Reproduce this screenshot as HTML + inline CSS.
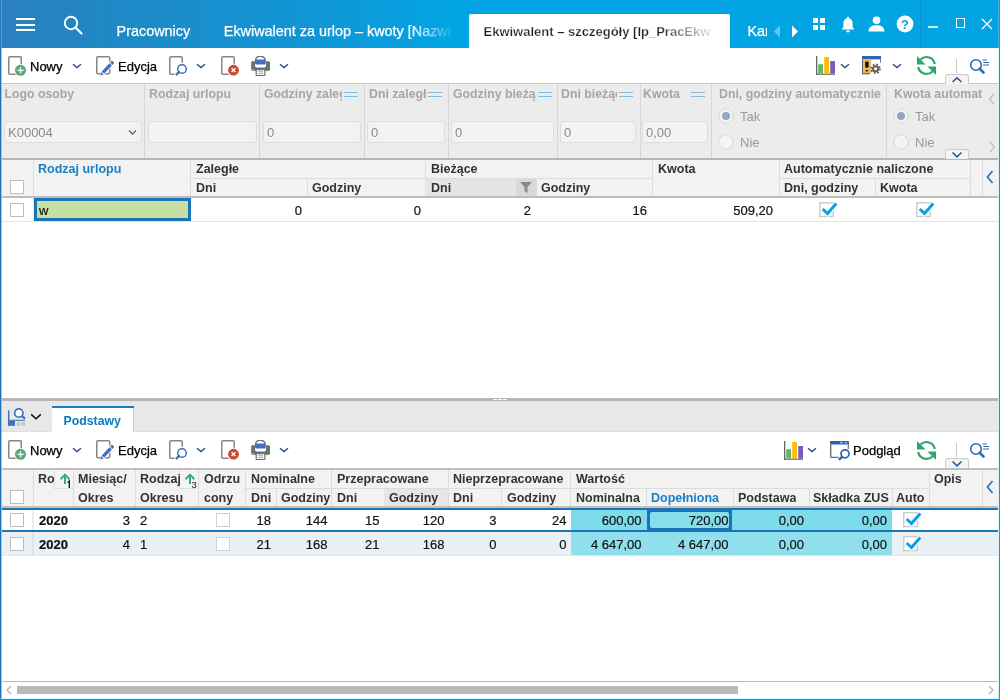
<!DOCTYPE html><html><head><meta charset="utf-8"><style>
*{box-sizing:border-box;margin:0;padding:0}
html,body{width:1000px;height:700px;overflow:hidden;background:#fff;font-family:"Liberation Sans",sans-serif;font-size:13px;color:#222}
.a{position:absolute}
#root{position:absolute;left:0;top:0;width:1000px;height:700px;will-change:transform;background:#fff}
.tt{color:#fff;font-size:14.4px;white-space:nowrap;line-height:16px;-webkit-text-stroke:0.25px #fff}
.lbl{position:absolute;color:#a6a6a6;font-weight:bold;font-size:12.3px;white-space:nowrap;overflow:hidden;line-height:15px}
.inp{position:absolute;background:#f3f3f3;border:1px solid #dcdcdc;border-radius:3px;height:21.5px;top:121px;color:#8a8a8a;padding-left:3px;padding-top:1px;line-height:19px;font-size:13px;white-space:nowrap}
.hd{position:absolute;font-weight:bold;color:#333;font-size:12.5px;white-space:nowrap;line-height:15px;overflow:hidden}
.c{position:absolute;font-size:13px;color:#111;white-space:nowrap;line-height:15px;-webkit-text-stroke:0.2px #111}
.r{text-align:right}
.cb{position:absolute;width:14px;height:14px;border:1px solid #bdbdbd;background:#fff}
.tb{position:absolute;font-size:13px;color:#000;white-space:nowrap;line-height:15px;-webkit-text-stroke:0.25px #000}
</style></head><body><div id="root"><div class="a" style="left:0;top:0;width:1000px;height:48px;background:linear-gradient(90deg,#2a80c0 0px,#2187c5 100px,#1195d4 300px,#03a4e3 450px,#03a4e3 1000px)"></div>
<div class="a" style="left:0px;top:0px;width:1px;height:48px;background:#2a78b8;"></div>
<div class="a" style="left:1px;top:0px;width:1px;height:48px;background:#5a9dd0;"></div>
<div class="a" style="left:16px;top:18px;width:19px;height:2px;background:#fff;"></div>
<div class="a" style="left:16px;top:23.5px;width:19px;height:2px;background:#fff;"></div>
<div class="a" style="left:16px;top:29px;width:19px;height:2px;background:#fff;"></div>
<svg class="a" style="left:60px;top:12px" width="26" height="26" viewBox="0 0 26 26"><circle cx="11" cy="11" r="6.2" fill="none" stroke="#fff" stroke-width="2"/><line x1="15.5" y1="15.5" x2="21.5" y2="21.5" stroke="#fff" stroke-width="2.2" stroke-linecap="round"/></svg>
<div class="tt a" style="left:116.6px;top:22.5px;">Pracownicy</div>
<div class="tt a" style="left:223.8px;top:22.5px;width:226px;overflow:hidden;-webkit-mask-image:linear-gradient(90deg,#000 185px,rgba(0,0,0,0.15) 226px)">Ekwiwalent za urlop – kwoty [Nazwisko</div>
<div class="a" style="left:469px;top:14px;width:261px;height:34px;background:#fff;border-radius:2px 2px 0 0"></div>
<div class="tt a" style="left:483.5px;top:24px;color:#1e1e1e;font-weight:bold;font-size:13px;line-height:15px;width:232px;overflow:hidden;-webkit-mask-image:linear-gradient(90deg,#000 175px,rgba(0,0,0,0.05) 232px)">Ekwiwalent – szczegóły [lp_PracEkw</div>
<div class="tt a" style="left:747.5px;top:22.5px;width:19.5px;overflow:hidden">Kar</div>
<svg class="a" style="left:773px;top:25px" width="8" height="13" viewBox="0 0 8 13"><path d="M7 0.5 L1 6.5 L7 12.5 Z" fill="#6cc4ee"/></svg>
<svg class="a" style="left:791px;top:25px" width="8" height="13" viewBox="0 0 8 13"><path d="M1 0.5 L7 6.5 L1 12.5 Z" fill="#fff"/></svg>
<div class="a" style="left:813px;top:18px;width:5px;height:5px;background:#fff;"></div>
<div class="a" style="left:820px;top:18px;width:5px;height:5px;background:#fff;"></div>
<div class="a" style="left:813px;top:25px;width:5px;height:5px;background:#fff;"></div>
<div class="a" style="left:820px;top:25px;width:5px;height:5px;background:#fff;"></div>
<svg class="a" style="left:840px;top:16px" width="16" height="17" viewBox="0 0 16 17"><path d="M8 1 C8.8 1 9.2 1.6 9.2 2.2 C11.6 2.8 12.6 5 12.6 7.5 L12.6 11 L14.5 13.5 L1.5 13.5 L3.4 11 L3.4 7.5 C3.4 5 4.4 2.8 6.8 2.2 C6.8 1.6 7.2 1 8 1 Z" fill="#fff"/><path d="M6 14.5 L10 14.5 C10 15.7 9.1 16.5 8 16.5 C6.9 16.5 6 15.7 6 14.5Z" fill="#fff"/></svg>
<svg class="a" style="left:868px;top:16px" width="17" height="16" viewBox="0 0 17 16"><circle cx="8.5" cy="4.3" r="3.8" fill="#fff"/><path d="M0.5 15.5 C0.5 11 4 9.3 8.5 9.3 C13 9.3 16.5 11 16.5 15.5 Z" fill="#fff"/></svg>
<svg class="a" style="left:896px;top:15px" width="18" height="18" viewBox="0 0 18 18"><circle cx="9" cy="9" r="8.4" fill="#fff"/><text x="9" y="13.6" text-anchor="middle" font-family="Liberation Sans" font-weight="bold" font-size="13" fill="#03a4e3">?</text></svg>
<div class="a" style="left:920px;top:0px;width:1px;height:48px;background:#0793cd;"></div>
<div class="a" style="left:998px;top:0px;width:1px;height:47px;background:#38b3e8;"></div>
<div class="a" style="left:928px;top:26px;width:10px;height:1.8px;background:rgba(255,255,255,0.8);"></div>
<div class="a" style="left:955.5px;top:18px;width:9.8px;height:9.8px;border:1.2px solid #fff"></div>
<svg class="a" style="left:981px;top:18px" width="12" height="12" viewBox="0 0 12 12"><path d="M1 1 L11 11 M11 1 L1 11" stroke="#fff" stroke-width="1.3"/></svg>
<svg class="a" style="left:8px;top:56px" width="22" height="22" viewBox="0 0 22 22"><rect x="0.75" y="0.75" width="12.5" height="17.5" rx="1.2" fill="none" stroke="#858585" stroke-width="1.5"/><circle cx="12.5" cy="14.3" r="6.4" fill="#fff"/><circle cx="12.5" cy="14.3" r="5.5" fill="#58a878"/><path d="M12.5 11.2 V17.4 M9.4 14.3 H15.6" stroke="#fff" stroke-width="1.3"/></svg>
<div class="tb" style="left:30px;top:59px;">Nowy</div>
<svg class="a" style="left:72px;top:63px" width="10" height="6" viewBox="0 0 10 6"><path d="M1 1.2 L5.0 4.6 L9 1.2" fill="none" stroke="#2c4f8a" stroke-width="1.5"/></svg>
<svg class="a" style="left:96px;top:56px" width="22" height="22" viewBox="0 0 22 22"><rect x="0.75" y="0.75" width="13.0" height="17.0" rx="1.2" fill="none" stroke="#858585" stroke-width="1.5"/><g transform="translate(4.2 19.6) rotate(-47)"><path d="M-0.8 0 L3.2 -2.6 H19.6 V2.6 H3.2 Z" fill="#fff"/><path d="M0 0 L3.2 -1.75 V1.75 Z" fill="#3f74c0"/><rect x="4.1" y="-1.75" width="11.3" height="3.5" fill="#3f74c0"/><rect x="16.2" y="-1.75" width="2.8" height="3.5" rx="0.8" fill="#3f74c0"/></g></svg>
<div class="tb" style="left:118px;top:59px;">Edycja</div>
<svg class="a" style="left:169px;top:56px" width="22" height="22" viewBox="0 0 22 22"><rect x="0.75" y="0.75" width="12.5" height="17.5" rx="1.2" fill="none" stroke="#858585" stroke-width="1.5"/><circle cx="13" cy="13" r="4.3" fill="#fff" stroke="#fff" stroke-width="4"/><path d="M9.5 16.5 L7.5 18.5" stroke="#fff" stroke-width="4.5" stroke-linecap="round"/><circle cx="13" cy="13" r="4.3" fill="#fff" stroke="#3d72bb" stroke-width="1.5"/><path d="M9.9 16.1 L7.6 18.4" stroke="#3d72bb" stroke-width="2.4" stroke-linecap="round"/></svg>
<svg class="a" style="left:196px;top:63px" width="10" height="6" viewBox="0 0 10 6"><path d="M1 1.2 L5.0 4.6 L9 1.2" fill="none" stroke="#2c4f8a" stroke-width="1.5"/></svg>
<svg class="a" style="left:221px;top:56px" width="22" height="22" viewBox="0 0 22 22"><rect x="0.75" y="0.75" width="12.5" height="17.5" rx="1.2" fill="none" stroke="#858585" stroke-width="1.5"/><circle cx="12.5" cy="14.2" r="6.3" fill="#fff"/><circle cx="12.5" cy="14.2" r="5.4" fill="#d2462a"/><path d="M10.6 12.3 L14.4 16.1 M14.4 12.3 L10.6 16.1" stroke="#fff" stroke-width="1.4"/></svg>
<svg class="a" style="left:250px;top:56px" width="22" height="22" viewBox="0 0 22 22"><rect x="1.2" y="5.2" width="18.8" height="9.6" rx="1.4" fill="#6e6e6e"/><rect x="5" y="5.2" width="11" height="6.2" rx="1.6" fill="#fff"/><path d="M5.4 5 Q5.4 0.3 10.3 0.3 Q15.2 0.3 15.2 5" fill="#fff" stroke="#6e6e6e" stroke-width="1.3"/><rect x="5" y="3.6" width="10.7" height="5" rx="1" fill="#3f74c0"/><rect x="2.2" y="13" width="1.6" height="0.9" fill="#c8c8c8"/><rect x="6.2" y="13.6" width="8.7" height="5.9" rx="0.6" fill="#fff" stroke="#6e6e6e" stroke-width="1.2"/><path d="M8.2 15.7 H13 M8.2 17.4 H13" stroke="#86a8dc" stroke-width="1"/></svg>
<svg class="a" style="left:279px;top:63px" width="10" height="6" viewBox="0 0 10 6"><path d="M1 1.2 L5.0 4.6 L9 1.2" fill="none" stroke="#2c4f8a" stroke-width="1.5"/></svg>
<svg class="a" style="left:815px;top:54px" width="22" height="22" viewBox="0 0 22 22"><rect x="1" y="2" width="1.3" height="18.8" fill="#666"/><rect x="1" y="19.6" width="19" height="1.2" fill="#666"/><rect x="3.2" y="10.2" width="4.8" height="9.4" fill="#62b76a"/><rect x="9.2" y="3" width="4.8" height="16.6" fill="#fdbf00"/><rect x="15.2" y="7" width="4.8" height="12.6" fill="#7e57c2"/></svg>
<svg class="a" style="left:840px;top:63px" width="10" height="6" viewBox="0 0 10 6"><path d="M1 1.2 L5.0 4.6 L9 1.2" fill="none" stroke="#2c4f8a" stroke-width="1.5"/></svg>
<svg class="a" style="left:861px;top:54px" width="22" height="22" viewBox="0 0 22 22"><rect x="1" y="2" width="19" height="3.4" fill="#2f66b3"/><rect x="19" y="5.4" width="1.1" height="3.2" fill="#777"/><path d="M1.6 5.4 V19.6 H9" fill="none" stroke="#555" stroke-width="1.1"/><rect x="2.1" y="5.4" width="8" height="13.8" fill="#eeba55"/><rect x="4.2" y="7.4" width="3.4" height="6.4" rx="1.2" fill="#111"/><path d="M4.4 16 H7.4 L5.9 17.9 Z" fill="#111"/><g transform="translate(14.6 14.8)"><circle r="4.3" fill="none" stroke="#5e5e5e" stroke-width="1.9" stroke-dasharray="1.7 1.68"/><circle r="2.6" fill="none" stroke="#5e5e5e" stroke-width="2.1"/></g></svg>
<svg class="a" style="left:892px;top:63px" width="10" height="6" viewBox="0 0 10 6"><path d="M1 1.2 L5.0 4.6 L9 1.2" fill="none" stroke="#2c4f8a" stroke-width="1.5"/></svg>
<svg class="a" style="left:916px;top:54px" width="22" height="22" viewBox="0 0 22 22"><g fill="none" stroke="#2ea56a" stroke-width="2.2"><path d="M18.8 10 A8.4 8.4 0 0 0 4.56 5.56"/><path d="M2.23 12.96 A8.4 8.4 0 0 0 16.44 17.44"/></g><path d="M1 2 L1 10.6 L9.6 10.6 Z" fill="#2ea56a"/><path d="M20 21 L20 12.4 L11.4 12.4 Z" fill="#2ea56a"/></svg>
<div class="a" style="left:956px;top:59px;width:1px;height:14px;background:#c8c8c8;"></div>
<svg class="a" style="left:969px;top:58px" width="22" height="18" viewBox="0 0 22 18"><circle cx="7" cy="7" r="5.3" fill="none" stroke="#2f68b5" stroke-width="1.6"/><path d="M10.6 10.6 L14.5 14.5" stroke="#2f68b5" stroke-width="2.6" stroke-linecap="round"/><path d="M13.5 2 H18 M14.5 4.5 H20 M14 7 H20" stroke="#2f68b5" stroke-width="1.1"/></svg>
<div class="a" style="left:0px;top:83px;width:1000px;height:1px;background:#c9c9c9;"></div>
<div class="a" style="left:0px;top:84px;width:1000px;height:74px;background:#ececec;"></div>
<div class="a" style="left:0px;top:158px;width:1000px;height:2px;background:#b5b5b5;"></div>
<div class="a" style="left:144px;top:84px;width:1px;height:74px;background:#d6d6d6;"></div>
<div class="a" style="left:259px;top:84px;width:1px;height:74px;background:#d6d6d6;"></div>
<div class="a" style="left:364px;top:84px;width:1px;height:74px;background:#d6d6d6;"></div>
<div class="a" style="left:448px;top:84px;width:1px;height:74px;background:#d6d6d6;"></div>
<div class="a" style="left:557px;top:84px;width:1px;height:74px;background:#d6d6d6;"></div>
<div class="a" style="left:640px;top:84px;width:1px;height:74px;background:#d6d6d6;"></div>
<div class="a" style="left:711px;top:84px;width:1px;height:74px;background:#d6d6d6;"></div>
<div class="a" style="left:886px;top:84px;width:1px;height:74px;background:#d6d6d6;"></div>
<div class="lbl" style="left:4.5px;top:87px;width:135px">Logo osoby</div>
<div class="lbl" style="left:149px;top:87px;width:108px">Rodzaj urlopu</div>
<div class="lbl" style="left:264px;top:87px;width:78px">Godziny zaległe</div>
<div class="a" style="left:344px;top:92px;width:14px;height:1.2px;background:#86bce0;"></div>
<div class="a" style="left:344px;top:96px;width:14px;height:1.2px;background:#86bce0;"></div>
<div class="lbl" style="left:369px;top:87px;width:58px">Dni zaległe</div>
<div class="a" style="left:428px;top:92px;width:14px;height:1.2px;background:#86bce0;"></div>
<div class="a" style="left:428px;top:96px;width:14px;height:1.2px;background:#86bce0;"></div>
<div class="lbl" style="left:453px;top:87px;width:83px">Godziny bieżące</div>
<div class="a" style="left:538px;top:92px;width:14px;height:1.2px;background:#86bce0;"></div>
<div class="a" style="left:538px;top:96px;width:14px;height:1.2px;background:#86bce0;"></div>
<div class="lbl" style="left:561px;top:87px;width:56px">Dni bieżące</div>
<div class="a" style="left:619px;top:92px;width:14px;height:1.2px;background:#86bce0;"></div>
<div class="a" style="left:619px;top:96px;width:14px;height:1.2px;background:#86bce0;"></div>
<div class="lbl" style="left:643px;top:87px;width:45px">Kwota</div>
<div class="a" style="left:691px;top:92px;width:14px;height:1.2px;background:#86bce0;"></div>
<div class="a" style="left:691px;top:96px;width:14px;height:1.2px;background:#86bce0;"></div>
<div class="lbl" style="left:719px;top:87px;width:165px">Dni, godziny automatycznie</div>
<div class="lbl" style="left:894px;top:87px;width:88px">Kwota automatyczne</div>
<div class="inp" style="left:4px;width:137.5px">K00004</div>
<svg class="a" style="left:128px;top:129px" width="10" height="7" viewBox="0 0 10 7"><path d="M1 1.5 L4.5 5 L8 1.5" fill="none" stroke="#666" stroke-width="1.3"/></svg>
<div class="inp" style="left:148px;width:109px"></div>
<div class="inp" style="left:263px;width:98px">0</div>
<div class="inp" style="left:367px;width:78px">0</div>
<div class="inp" style="left:451px;width:103px">0</div>
<div class="inp" style="left:560px;width:76px">0</div>
<div class="inp" style="left:642px;width:66px">0,00</div>
<svg class="a" style="left:718px;top:108px" width="16" height="16" viewBox="0 0 16 16"><circle cx="8" cy="8" r="7.2" fill="#f4f4f4" stroke="#d6d6d6" stroke-width="1"/><circle cx="8" cy="8" r="4" fill="#93a6c2"/></svg>
<div class="lbl" style="left:740px;top:109px;font-weight:normal;color:#9a9a9a;font-size:13px">Tak</div>
<svg class="a" style="left:718px;top:134px" width="16" height="16" viewBox="0 0 16 16"><circle cx="8" cy="8" r="7.2" fill="#f4f4f4" stroke="#d6d6d6" stroke-width="1"/></svg>
<div class="lbl" style="left:740px;top:135px;font-weight:normal;color:#9a9a9a;font-size:13px">Nie</div>
<svg class="a" style="left:893px;top:108px" width="16" height="16" viewBox="0 0 16 16"><circle cx="8" cy="8" r="7.2" fill="#f4f4f4" stroke="#d6d6d6" stroke-width="1"/><circle cx="8" cy="8" r="4" fill="#93a6c2"/></svg>
<div class="lbl" style="left:915px;top:109px;font-weight:normal;color:#9a9a9a;font-size:13px">Tak</div>
<svg class="a" style="left:893px;top:134px" width="16" height="16" viewBox="0 0 16 16"><circle cx="8" cy="8" r="7.2" fill="#f4f4f4" stroke="#d6d6d6" stroke-width="1"/></svg>
<div class="lbl" style="left:915px;top:135px;font-weight:normal;color:#9a9a9a;font-size:13px">Nie</div>
<svg class="a" style="left:987.5px;top:93px" width="8" height="12" viewBox="0 0 8 12"><path d="M6 1 L1.5 6 L6 11" fill="none" stroke="#bdbdbd" stroke-width="1.2"/></svg>
<svg class="a" style="left:987.5px;top:141px" width="8" height="12" viewBox="0 0 8 12"><path d="M2 1 L6.5 6 L2 11" fill="none" stroke="#bdbdbd" stroke-width="1.2"/></svg>
<div class="a" style="left:945px;top:74px;width:24px;height:10px;background:#f4f4f4;border:1px solid #cbcbcb;border-bottom:none;border-radius:3px 3px 0 0"></div>
<svg class="a" style="left:951px;top:76px" width="12" height="7" viewBox="0 0 12 7"><path d="M1.5 6 L6 1.8 L10.5 6" fill="none" stroke="#2a5d9f" stroke-width="1.6"/></svg>
<div class="a" style="left:945px;top:149px;width:24px;height:10px;background:#f4f4f4;border:1px solid #cbcbcb;border-bottom:none;border-radius:3px 3px 0 0"></div>
<svg class="a" style="left:951px;top:151px" width="12" height="7" viewBox="0 0 12 7"><path d="M1.5 1.5 L6 5.8 L10.5 1.5" fill="none" stroke="#2a5d9f" stroke-width="1.6"/></svg>
<div class="a" style="left:0px;top:160px;width:1000px;height:36px;background:#f2f2f2;"></div>
<div class="a" style="left:0px;top:196px;width:1000px;height:2px;background:#bdbdbd;"></div>
<div class="a" style="left:191px;top:178px;width:461px;height:1px;background:#dcdcdc;"></div>
<div class="a" style="left:780px;top:178px;width:190px;height:1px;background:#dcdcdc;"></div>
<div class="a" style="left:33px;top:160px;width:1px;height:36px;background:#dcdcdc;"></div>
<div class="a" style="left:190px;top:160px;width:1px;height:36px;background:#dcdcdc;"></div>
<div class="a" style="left:307px;top:178px;width:1px;height:18px;background:#dcdcdc;"></div>
<div class="a" style="left:425px;top:160px;width:1px;height:36px;background:#dcdcdc;"></div>
<div class="a" style="left:425px;top:179px;width:110px;height:17px;background:#e5e5e5;"></div>
<div class="a" style="left:516px;top:179px;width:20px;height:17px;background:#d9d9d9;"></div>
<svg class="a" style="left:519px;top:181px" width="14" height="13" viewBox="0 0 14 13"><path d="M1 1 H13 L8.5 6 V12 L5.5 10 V6 Z" fill="#8a8a8a"/></svg>
<div class="a" style="left:536px;top:178px;width:1px;height:18px;background:#dcdcdc;"></div>
<div class="a" style="left:652px;top:160px;width:1px;height:36px;background:#dcdcdc;"></div>
<div class="a" style="left:779px;top:160px;width:1px;height:36px;background:#dcdcdc;"></div>
<div class="a" style="left:875px;top:178px;width:1px;height:18px;background:#dcdcdc;"></div>
<div class="a" style="left:970px;top:160px;width:1px;height:36px;background:#dcdcdc;"></div>
<div class="a" style="left:982px;top:160px;width:1px;height:36px;background:#dcdcdc;"></div>
<div class="a" style="left:983px;top:160px;width:16px;height:36px;background:#f2f2f2;"></div>
<svg class="a" style="left:986px;top:170px" width="8" height="14" viewBox="0 0 8 14"><path d="M6.5 1 L1.5 7 L6.5 13" fill="none" stroke="#2d6bb5" stroke-width="1.6"/></svg>
<div class="cb" style="left:10px;top:180px"></div>
<div class="hd" style="left:38px;top:162px;color:#1b7fc3">Rodzaj urlopu</div>
<div class="hd" style="left:196px;top:162px;">Zaległe</div>
<div class="hd" style="left:196px;top:181px;">Dni</div>
<div class="hd" style="left:312px;top:181px;">Godziny</div>
<div class="hd" style="left:431px;top:162px;">Bieżące</div>
<div class="hd" style="left:431px;top:181px;">Dni</div>
<div class="hd" style="left:541px;top:181px;">Godziny</div>
<div class="hd" style="left:658px;top:162px;">Kwota</div>
<div class="hd" style="left:784px;top:162px;">Automatycznie naliczone</div>
<div class="hd" style="left:784px;top:181px;">Dni, godziny</div>
<div class="hd" style="left:880px;top:181px;">Kwota</div>
<div class="cb" style="left:10px;top:203px"></div>
<div class="a" style="left:34px;top:198px;width:157px;height:23px;background:#1b74b8;"></div>
<div class="a" style="left:37px;top:201px;width:151px;height:17px;background:#c6e0a4;"></div>
<div class="c" style="left:39px;top:203px;">w</div>
<div class="c r" style="left:102px;width:200px;top:203px;">0</div>
<div class="c r" style="left:221px;width:200px;top:203px;">0</div>
<div class="c r" style="left:331px;width:200px;top:203px;">2</div>
<div class="c r" style="left:447px;width:200px;top:203px;">16</div>
<div class="c r" style="left:573px;width:200px;top:203px;">509,20</div>
<svg class="a" style="left:819px;top:202px" width="20" height="17" viewBox="0 0 20 17"><rect x="0.75" y="0.75" width="13.5" height="13.8" fill="#fff" stroke="#cdcdcd" stroke-width="1.5"/><path d="M3.7 7 L8.5 11.6 L17.3 1.4" fill="none" stroke="#fff" stroke-width="5"/><path d="M3.7 7 L8.5 11.6 L17.3 1.4" fill="none" stroke="#08a2e2" stroke-width="3"/></svg>
<svg class="a" style="left:916px;top:202px" width="20" height="17" viewBox="0 0 20 17"><rect x="0.75" y="0.75" width="13.5" height="13.8" fill="#fff" stroke="#cdcdcd" stroke-width="1.5"/><path d="M3.7 7 L8.5 11.6 L17.3 1.4" fill="none" stroke="#fff" stroke-width="5"/><path d="M3.7 7 L8.5 11.6 L17.3 1.4" fill="none" stroke="#08a2e2" stroke-width="3"/></svg>
<div class="a" style="left:0px;top:221px;width:1000px;height:1px;background:#dde6ee;"></div>
<div class="a" style="left:33px;top:198px;width:1px;height:23px;background:#e0e9f1;"></div>
<div class="a" style="left:0px;top:398px;width:1000px;height:3px;background:#b6b6b6;"></div>
<div class="a" style="left:493px;top:399px;width:4px;height:1px;background:#fff;"></div>
<div class="a" style="left:498px;top:399px;width:4px;height:1px;background:#fff;"></div>
<div class="a" style="left:503px;top:399px;width:4px;height:1px;background:#fff;"></div>
<div class="a" style="left:0px;top:401px;width:1000px;height:31px;background:#e8e8e8;"></div>
<div class="a" style="left:0px;top:431px;width:52px;height:1px;background:#dedede;"></div>
<div class="a" style="left:134px;top:431px;width:866px;height:1px;background:#dedede;"></div>
<div class="a" style="left:52px;top:406px;width:82px;height:26px;background:#fff;"></div>
<div class="a" style="left:133px;top:408px;width:1px;height:24px;background:#cfcfcf;"></div>
<div class="a" style="left:52px;top:406px;width:82px;height:2px;background:#1a7cc1;"></div>
<div class="hd" style="left:63.5px;top:414px;color:#0b7bc0;font-size:12.3px">Podstawy</div>
<svg class="a" style="left:7px;top:407px" width="24" height="22" viewBox="0 0 24 22"><rect x="1" y="3.4" width="1.4" height="15.2" fill="#3d72bb"/><rect x="1" y="12.8" width="17" height="1" fill="#3d72bb"/><rect x="1" y="13.8" width="7" height="5" fill="#3d72bb"/><rect x="9.8" y="15.2" width="3" height="3.6" fill="#c4c4c4"/><rect x="14.2" y="15.2" width="3.8" height="3.6" fill="#c4c4c4"/><circle cx="11.8" cy="6" r="4.2" fill="#fff" stroke="#3d72bb" stroke-width="1.7"/><path d="M15 9.4 L17.4 11" stroke="#3d72bb" stroke-width="2.2" stroke-linecap="round"/></svg>
<svg class="a" style="left:30px;top:413px" width="12" height="8" viewBox="0 0 12 8"><path d="M1.2 1.4 L6 5.8 L10.8 1.4" fill="none" stroke="#111" stroke-width="1.5"/></svg>
<svg class="a" style="left:8px;top:440px" width="22" height="22" viewBox="0 0 22 22"><rect x="0.75" y="0.75" width="12.5" height="17.5" rx="1.2" fill="none" stroke="#858585" stroke-width="1.5"/><circle cx="12.5" cy="14.3" r="6.4" fill="#fff"/><circle cx="12.5" cy="14.3" r="5.5" fill="#58a878"/><path d="M12.5 11.2 V17.4 M9.4 14.3 H15.6" stroke="#fff" stroke-width="1.3"/></svg>
<div class="tb" style="left:30px;top:443px;">Nowy</div>
<svg class="a" style="left:72px;top:447px" width="10" height="6" viewBox="0 0 10 6"><path d="M1 1.2 L5.0 4.6 L9 1.2" fill="none" stroke="#2c4f8a" stroke-width="1.5"/></svg>
<svg class="a" style="left:96px;top:440px" width="22" height="22" viewBox="0 0 22 22"><rect x="0.75" y="0.75" width="13.0" height="17.0" rx="1.2" fill="none" stroke="#858585" stroke-width="1.5"/><g transform="translate(4.2 19.6) rotate(-47)"><path d="M-0.8 0 L3.2 -2.6 H19.6 V2.6 H3.2 Z" fill="#fff"/><path d="M0 0 L3.2 -1.75 V1.75 Z" fill="#3f74c0"/><rect x="4.1" y="-1.75" width="11.3" height="3.5" fill="#3f74c0"/><rect x="16.2" y="-1.75" width="2.8" height="3.5" rx="0.8" fill="#3f74c0"/></g></svg>
<div class="tb" style="left:118px;top:443px;">Edycja</div>
<svg class="a" style="left:169px;top:440px" width="22" height="22" viewBox="0 0 22 22"><rect x="0.75" y="0.75" width="12.5" height="17.5" rx="1.2" fill="none" stroke="#858585" stroke-width="1.5"/><circle cx="13" cy="13" r="4.3" fill="#fff" stroke="#fff" stroke-width="4"/><path d="M9.5 16.5 L7.5 18.5" stroke="#fff" stroke-width="4.5" stroke-linecap="round"/><circle cx="13" cy="13" r="4.3" fill="#fff" stroke="#3d72bb" stroke-width="1.5"/><path d="M9.9 16.1 L7.6 18.4" stroke="#3d72bb" stroke-width="2.4" stroke-linecap="round"/></svg>
<svg class="a" style="left:196px;top:447px" width="10" height="6" viewBox="0 0 10 6"><path d="M1 1.2 L5.0 4.6 L9 1.2" fill="none" stroke="#2c4f8a" stroke-width="1.5"/></svg>
<svg class="a" style="left:221px;top:440px" width="22" height="22" viewBox="0 0 22 22"><rect x="0.75" y="0.75" width="12.5" height="17.5" rx="1.2" fill="none" stroke="#858585" stroke-width="1.5"/><circle cx="12.5" cy="14.2" r="6.3" fill="#fff"/><circle cx="12.5" cy="14.2" r="5.4" fill="#d2462a"/><path d="M10.6 12.3 L14.4 16.1 M14.4 12.3 L10.6 16.1" stroke="#fff" stroke-width="1.4"/></svg>
<svg class="a" style="left:250px;top:440px" width="22" height="22" viewBox="0 0 22 22"><rect x="1.2" y="5.2" width="18.8" height="9.6" rx="1.4" fill="#6e6e6e"/><rect x="5" y="5.2" width="11" height="6.2" rx="1.6" fill="#fff"/><path d="M5.4 5 Q5.4 0.3 10.3 0.3 Q15.2 0.3 15.2 5" fill="#fff" stroke="#6e6e6e" stroke-width="1.3"/><rect x="5" y="3.6" width="10.7" height="5" rx="1" fill="#3f74c0"/><rect x="2.2" y="13" width="1.6" height="0.9" fill="#c8c8c8"/><rect x="6.2" y="13.6" width="8.7" height="5.9" rx="0.6" fill="#fff" stroke="#6e6e6e" stroke-width="1.2"/><path d="M8.2 15.7 H13 M8.2 17.4 H13" stroke="#86a8dc" stroke-width="1"/></svg>
<svg class="a" style="left:279px;top:447px" width="10" height="6" viewBox="0 0 10 6"><path d="M1 1.2 L5.0 4.6 L9 1.2" fill="none" stroke="#2c4f8a" stroke-width="1.5"/></svg>
<svg class="a" style="left:783px;top:439px" width="22" height="22" viewBox="0 0 22 22"><rect x="1" y="2" width="1.3" height="18.8" fill="#666"/><rect x="1" y="19.6" width="19" height="1.2" fill="#666"/><rect x="3.2" y="10.2" width="4.8" height="9.4" fill="#62b76a"/><rect x="9.2" y="3" width="4.8" height="16.6" fill="#fdbf00"/><rect x="15.2" y="7" width="4.8" height="12.6" fill="#7e57c2"/></svg>
<svg class="a" style="left:807px;top:447px" width="10" height="6" viewBox="0 0 10 6"><path d="M1 1.2 L5.0 4.6 L9 1.2" fill="none" stroke="#2c4f8a" stroke-width="1.5"/></svg>
<svg class="a" style="left:826px;top:436px" width="26" height="26" viewBox="0 0 26 26"><rect x="4" y="5" width="19" height="3.4" rx="0.6" fill="#2a65b5"/><rect x="14" y="6.2" width="2.8" height="1" fill="#cfe0f5"/><rect x="19" y="6.2" width="2.2" height="1" fill="#cfe0f5"/><path d="M4.7 8.2 V20.6 Q4.7 21.4 5.5 21.4 H12.5" fill="none" stroke="#6e6e6e" stroke-width="1.4"/><path d="M22.3 8.2 V13" stroke="#6e6e6e" stroke-width="1.2"/><circle cx="19" cy="17.8" r="4" fill="#fff" stroke="#2a65b5" stroke-width="1.7"/><path d="M16 20.8 L13.6 23.2" stroke="#2a65b5" stroke-width="2.4" stroke-linecap="round"/></svg>
<div class="tb" style="left:853px;top:443px;">Podgląd</div>
<svg class="a" style="left:916px;top:439px" width="22" height="22" viewBox="0 0 22 22"><g fill="none" stroke="#2ea56a" stroke-width="2.2"><path d="M18.8 10 A8.4 8.4 0 0 0 4.56 5.56"/><path d="M2.23 12.96 A8.4 8.4 0 0 0 16.44 17.44"/></g><path d="M1 2 L1 10.6 L9.6 10.6 Z" fill="#2ea56a"/><path d="M20 21 L20 12.4 L11.4 12.4 Z" fill="#2ea56a"/></svg>
<div class="a" style="left:956px;top:443px;width:1px;height:14px;background:#c8c8c8;"></div>
<svg class="a" style="left:969px;top:442px" width="22" height="18" viewBox="0 0 22 18"><circle cx="7" cy="7" r="5.3" fill="none" stroke="#2f68b5" stroke-width="1.6"/><path d="M10.6 10.6 L14.5 14.5" stroke="#2f68b5" stroke-width="2.6" stroke-linecap="round"/><path d="M13.5 2 H18 M14.5 4.5 H20 M14 7 H20" stroke="#2f68b5" stroke-width="1.1"/></svg>
<div class="a" style="left:945px;top:458px;width:24px;height:10px;background:#f4f4f4;border:1px solid #cbcbcb;border-bottom:none;border-radius:3px 3px 0 0"></div>
<svg class="a" style="left:951px;top:460px" width="12" height="7" viewBox="0 0 12 7"><path d="M1.5 1.5 L6 5.8 L10.5 1.5" fill="none" stroke="#2a5d9f" stroke-width="1.6"/></svg>
<div class="a" style="left:0px;top:468px;width:1000px;height:2px;background:#bdbdbd;"></div>
<div class="a" style="left:0px;top:470px;width:1000px;height:36px;background:#f2f2f2;"></div>
<div class="a" style="left:0px;top:506px;width:1000px;height:2px;background:#c4c0bc;"></div>
<div class="a" style="left:246px;top:488px;width:683px;height:1px;background:#dcdcdc;"></div>
<div class="a" style="left:33px;top:470px;width:1px;height:36px;background:#dcdcdc;"></div>
<div class="a" style="left:135px;top:470px;width:1px;height:36px;background:#dcdcdc;"></div>
<div class="a" style="left:198px;top:470px;width:1px;height:36px;background:#dcdcdc;"></div>
<div class="a" style="left:245px;top:470px;width:1px;height:36px;background:#dcdcdc;"></div>
<div class="a" style="left:331px;top:470px;width:1px;height:36px;background:#dcdcdc;"></div>
<div class="a" style="left:448px;top:470px;width:1px;height:36px;background:#dcdcdc;"></div>
<div class="a" style="left:570px;top:470px;width:1px;height:36px;background:#dcdcdc;"></div>
<div class="a" style="left:929px;top:470px;width:1px;height:36px;background:#dcdcdc;"></div>
<div class="a" style="left:982px;top:470px;width:1px;height:36px;background:#dcdcdc;"></div>
<div class="a" style="left:73px;top:488px;width:1px;height:18px;background:#dcdcdc;"></div>
<div class="a" style="left:276px;top:488px;width:1px;height:18px;background:#dcdcdc;"></div>
<div class="a" style="left:384px;top:488px;width:1px;height:18px;background:#dcdcdc;"></div>
<div class="a" style="left:501px;top:488px;width:1px;height:18px;background:#dcdcdc;"></div>
<div class="a" style="left:646px;top:488px;width:1px;height:18px;background:#dcdcdc;"></div>
<div class="a" style="left:733px;top:488px;width:1px;height:18px;background:#dcdcdc;"></div>
<div class="a" style="left:809px;top:488px;width:1px;height:18px;background:#dcdcdc;"></div>
<div class="a" style="left:892px;top:488px;width:1px;height:18px;background:#dcdcdc;"></div>
<div class="a" style="left:73px;top:470px;width:1px;height:36px;background:#dcdcdc;"></div>
<div class="a" style="left:198px;top:470px;width:1px;height:36px;background:#dcdcdc;"></div>
<div class="a" style="left:54px;top:470px;width:19px;height:18px;background:#f4f4f4;"></div>
<div class="a" style="left:54px;top:470px;width:1px;height:19px;background:#dedede;"></div>
<div class="a" style="left:54px;top:488px;width:19px;height:1px;background:#dedede;"></div>
<svg class="a" style="left:54px;top:470px" width="19" height="19" viewBox="0 0 19 19"><path d="M11 14 V5 M6.6 9.2 L11 4.6 L15.4 9.2" fill="none" stroke="#46a877" stroke-width="2"/><path d="M13.6 12.6 L15.3 11 V18" fill="none" stroke="#111" stroke-width="1.3"/></svg>
<div class="a" style="left:179px;top:470px;width:19px;height:18px;background:#f4f4f4;"></div>
<div class="a" style="left:179px;top:470px;width:1px;height:19px;background:#dedede;"></div>
<div class="a" style="left:179px;top:488px;width:19px;height:1px;background:#dedede;"></div>
<svg class="a" style="left:179px;top:470px" width="19" height="19" viewBox="0 0 19 19"><path d="M11 14 V5 M6.6 9.2 L11 4.6 L15.4 9.2" fill="none" stroke="#46a877" stroke-width="2"/><text x="12.4" y="18" font-family="Liberation Sans" font-size="9.5" fill="#111">3</text></svg>
<div class="a" style="left:384px;top:489px;width:64px;height:17px;background:#e6e6e6;"></div>
<div class="a" style="left:983px;top:470px;width:17px;height:36px;background:#f2f2f2;"></div>
<svg class="a" style="left:986px;top:480px" width="8" height="14" viewBox="0 0 8 14"><path d="M6.5 1 L1.5 7 L6.5 13" fill="none" stroke="#2d6bb5" stroke-width="1.6"/></svg>
<div class="cb" style="left:10px;top:490px"></div>
<div class="hd" style="left:38px;top:472px;">Ro</div>
<div class="hd" style="left:78px;top:472px;">Miesiąc/</div>
<div class="hd" style="left:78px;top:491px;">Okres</div>
<div class="hd" style="left:140px;top:472px;width:39.5px">Rodzaj</div>
<div class="hd" style="left:140px;top:491px;">Okresu</div>
<div class="hd" style="left:204px;top:472px;">Odrzu</div>
<div class="hd" style="left:204px;top:491px;">cony</div>
<div class="hd" style="left:251px;top:472px;">Nominalne</div>
<div class="hd" style="left:251px;top:491px;">Dni</div>
<div class="hd" style="left:281px;top:491px;">Godziny</div>
<div class="hd" style="left:337px;top:472px;">Przepracowane</div>
<div class="hd" style="left:337px;top:491px;">Dni</div>
<div class="hd" style="left:389px;top:491px;">Godziny</div>
<div class="hd" style="left:453px;top:472px;">Nieprzepracowane</div>
<div class="hd" style="left:453px;top:491px;">Dni</div>
<div class="hd" style="left:507px;top:491px;">Godziny</div>
<div class="hd" style="left:576px;top:472px;">Wartość</div>
<div class="hd" style="left:576px;top:491px;">Nominalna</div>
<div class="hd" style="left:651px;top:491px;color:#1b7fc3">Dopełniona</div>
<div class="hd" style="left:738px;top:491px;">Podstawa</div>
<div class="hd" style="left:813px;top:491px;">Składka ZUS</div>
<div class="hd" style="left:896px;top:491px;">Auto</div>
<div class="hd" style="left:934px;top:472px;">Opis</div>
<div class="a" style="left:2px;top:508px;width:998px;height:2px;background:#1a74b8;"></div>
<div class="a" style="left:2px;top:510px;width:997px;height:20px;background:#fff;"></div>
<div class="a" style="left:2px;top:530px;width:998px;height:2px;background:#1a74b8;"></div>
<div class="a" style="left:2px;top:532px;width:997px;height:23px;background:#eaf1f6;"></div>
<div class="a" style="left:2px;top:555px;width:997px;height:1px;background:#dfe8ef;"></div>
<div class="a" style="left:571px;top:510px;width:321px;height:20px;background:#7edcea;"></div>
<div class="a" style="left:571px;top:532px;width:321px;height:23px;background:#8fe0ec;"></div>
<div class="a" style="left:647px;top:510px;width:85px;height:20px;background:#1a74b8;"></div>
<div class="a" style="left:650px;top:511.5px;width:79px;height:16.5px;background:#86deeb;border-radius:2px"></div>
<div class="a" style="left:32px;top:510px;width:2px;height:20px;background:#e3eef8;"></div>
<div class="a" style="left:32px;top:532px;width:2px;height:23px;background:#d9e6f2;"></div>
<div class="cb" style="left:10px;top:513px"></div>
<div class="c" style="left:39px;top:513px;font-weight:bold">2020</div>
<div class="c r" style="left:-70px;width:200px;top:513px;">3</div>
<div class="c" style="left:140px;top:513px;">2</div>
<div class="cb" style="left:216px;top:513px;border-color:#d0d0d0"></div>
<div class="c r" style="left:71px;width:200px;top:513px;">18</div>
<div class="c r" style="left:127.5px;width:200px;top:513px;">144</div>
<div class="c r" style="left:179.5px;width:200px;top:513px;">15</div>
<div class="c r" style="left:244.5px;width:200px;top:513px;">120</div>
<div class="c r" style="left:296.5px;width:200px;top:513px;">3</div>
<div class="c r" style="left:366.5px;width:200px;top:513px;">24</div>
<div class="c r" style="left:441.5px;width:200px;top:513px;">600,00</div>
<div class="c r" style="left:528.5px;width:200px;top:513px;">720,00</div>
<div class="c r" style="left:604px;width:200px;top:513px;">0,00</div>
<div class="c r" style="left:687px;width:200px;top:513px;">0,00</div>
<svg class="a" style="left:903px;top:512px" width="20" height="17" viewBox="0 0 20 17"><rect x="0.75" y="0.75" width="13.5" height="13.8" fill="#fff" stroke="#cdcdcd" stroke-width="1.5"/><path d="M3.7 7 L8.5 11.6 L17.3 1.4" fill="none" stroke="#fff" stroke-width="5"/><path d="M3.7 7 L8.5 11.6 L17.3 1.4" fill="none" stroke="#08a2e2" stroke-width="3"/></svg>
<div class="cb" style="left:10px;top:537px"></div>
<div class="c" style="left:39px;top:537px;font-weight:bold">2020</div>
<div class="c r" style="left:-70px;width:200px;top:537px;">4</div>
<div class="c" style="left:140px;top:537px;">1</div>
<div class="cb" style="left:216px;top:537px;border-color:#d0d0d0"></div>
<div class="c r" style="left:71px;width:200px;top:537px;">21</div>
<div class="c r" style="left:127.5px;width:200px;top:537px;">168</div>
<div class="c r" style="left:179.5px;width:200px;top:537px;">21</div>
<div class="c r" style="left:244.5px;width:200px;top:537px;">168</div>
<div class="c r" style="left:296.5px;width:200px;top:537px;">0</div>
<div class="c r" style="left:366.5px;width:200px;top:537px;">0</div>
<div class="c r" style="left:441.5px;width:200px;top:537px;">4 647,00</div>
<div class="c r" style="left:528.5px;width:200px;top:537px;">4 647,00</div>
<div class="c r" style="left:604px;width:200px;top:537px;">0,00</div>
<div class="c r" style="left:687px;width:200px;top:537px;">0,00</div>
<svg class="a" style="left:903px;top:536px" width="20" height="17" viewBox="0 0 20 17"><rect x="0.75" y="0.75" width="13.5" height="13.8" fill="#fff" stroke="#cdcdcd" stroke-width="1.5"/><path d="M3.7 7 L8.5 11.6 L17.3 1.4" fill="none" stroke="#fff" stroke-width="5"/><path d="M3.7 7 L8.5 11.6 L17.3 1.4" fill="none" stroke="#08a2e2" stroke-width="3"/></svg>
<div class="a" style="left:0px;top:681px;width:1000px;height:1px;background:#b9b9b9;"></div>
<div class="a" style="left:17px;top:686px;width:721px;height:7.5px;background:#b9b9b9;"></div>
<svg class="a" style="left:5px;top:685px" width="8" height="10" viewBox="0 0 8 10"><path d="M6 1 L2 5 L6 9" fill="none" stroke="#b0b0b0" stroke-width="1.2"/></svg>
<svg class="a" style="left:987px;top:685px" width="8" height="10" viewBox="0 0 8 10"><path d="M2 1 L6 5 L2 9" fill="none" stroke="#b0b0b0" stroke-width="1.2"/></svg>
<div class="a" style="left:0px;top:48px;width:1px;height:652px;background:#1a72b8;"></div>
<div class="a" style="left:1px;top:48px;width:1px;height:651px;background:#9cc4e6;"></div>
<div class="a" style="left:999px;top:48px;width:1px;height:652px;background:#03a3e3;"></div>
<div class="a" style="left:998px;top:48px;width:1px;height:651px;background:#d8f0fa;"></div>
<div class="a" style="left:0px;top:699px;width:1000px;height:1px;background:#03a3e3;"></div>
<div class="a" style="left:1px;top:698px;width:998px;height:1px;background:#d8f0fa;"></div></div></body></html>
